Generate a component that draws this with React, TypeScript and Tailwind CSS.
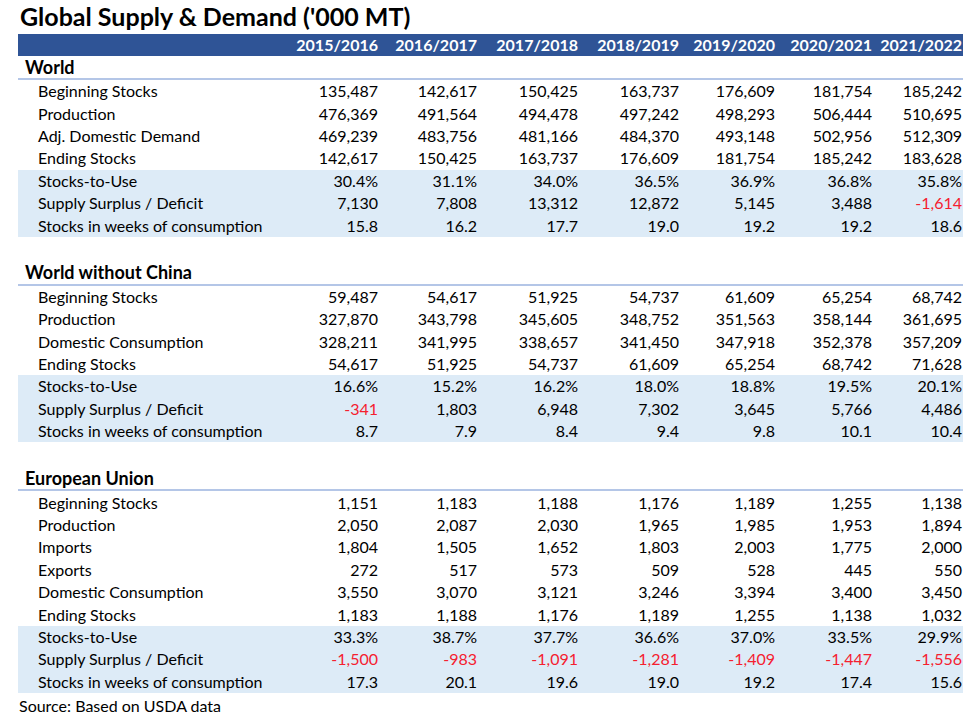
import React from "react";

type Row = { label: string; values: string[]; shaded?: boolean };
type Section = { title: string; rows: Row[] };

const years = ["2015/2016", "2016/2017", "2017/2018", "2018/2019", "2019/2020", "2020/2021", "2021/2022"];

const sections: Section[] = [
  {
    title: "World",
    rows: [
      { label: "Beginning Stocks", values: ["135,487", "142,617", "150,425", "163,737", "176,609", "181,754", "185,242"] },
      { label: "Production", values: ["476,369", "491,564", "494,478", "497,242", "498,293", "506,444", "510,695"] },
      { label: "Adj. Domestic Demand", values: ["469,239", "483,756", "481,166", "484,370", "493,148", "502,956", "512,309"] },
      { label: "Ending Stocks", values: ["142,617", "150,425", "163,737", "176,609", "181,754", "185,242", "183,628"] },
      { label: "Stocks-to-Use", values: ["30.4%", "31.1%", "34.0%", "36.5%", "36.9%", "36.8%", "35.8%"], shaded: true },
      { label: "Supply Surplus / Deficit", values: ["7,130", "7,808", "13,312", "12,872", "5,145", "3,488", "-1,614"], shaded: true },
      { label: "Stocks in weeks of consumption", values: ["15.8", "16.2", "17.7", "19.0", "19.2", "19.2", "18.6"], shaded: true },
    ],
  },
  {
    title: "World without China",
    rows: [
      { label: "Beginning Stocks", values: ["59,487", "54,617", "51,925", "54,737", "61,609", "65,254", "68,742"] },
      { label: "Production", values: ["327,870", "343,798", "345,605", "348,752", "351,563", "358,144", "361,695"] },
      { label: "Domestic Consumption", values: ["328,211", "341,995", "338,657", "341,450", "347,918", "352,378", "357,209"] },
      { label: "Ending Stocks", values: ["54,617", "51,925", "54,737", "61,609", "65,254", "68,742", "71,628"] },
      { label: "Stocks-to-Use", values: ["16.6%", "15.2%", "16.2%", "18.0%", "18.8%", "19.5%", "20.1%"], shaded: true },
      { label: "Supply Surplus / Deficit", values: ["-341", "1,803", "6,948", "7,302", "3,645", "5,766", "4,486"], shaded: true },
      { label: "Stocks in weeks of consumption", values: ["8.7", "7.9", "8.4", "9.4", "9.8", "10.1", "10.4"], shaded: true },
    ],
  },
  {
    title: "European Union",
    rows: [
      { label: "Beginning Stocks", values: ["1,151", "1,183", "1,188", "1,176", "1,189", "1,255", "1,138"] },
      { label: "Production", values: ["2,050", "2,087", "2,030", "1,965", "1,985", "1,953", "1,894"] },
      { label: "Imports", values: ["1,804", "1,505", "1,652", "1,803", "2,003", "1,775", "2,000"] },
      { label: "Exports", values: ["272", "517", "573", "509", "528", "445", "550"] },
      { label: "Domestic Consumption", values: ["3,550", "3,070", "3,121", "3,246", "3,394", "3,400", "3,450"] },
      { label: "Ending Stocks", values: ["1,183", "1,188", "1,176", "1,189", "1,255", "1,138", "1,032"] },
      { label: "Stocks-to-Use", values: ["33.3%", "38.7%", "37.7%", "36.6%", "37.0%", "33.5%", "29.9%"], shaded: true },
      { label: "Supply Surplus / Deficit", values: ["-1,500", "-983", "-1,091", "-1,281", "-1,409", "-1,447", "-1,556"], shaded: true },
      { label: "Stocks in weeks of consumption", values: ["17.3", "20.1", "19.6", "19.0", "19.2", "17.4", "15.6"], shaded: true },
    ],
  },
];

const grid = "grid grid-cols-[262px_99px_99px_101px_101px_96px_97px_90px]";

function DataRow({ row }: { row: Row }) {
  return (
    <div className={`${grid} h-[22.4px] items-center ${row.shaded ? "bg-[#ddebf7]" : ""}`}>
      <div className="pl-[20px] whitespace-nowrap">{row.label}</div>
      {row.values.map((v, i) => (
        <div key={i} className={`text-right pr-[1px] ${v.startsWith("-") ? "text-[#f5202f]" : ""}`}>
          {v}
        </div>
      ))}
    </div>
  );
}

export default function App() {
  return (
    <div className="w-[980px] h-[723px] bg-white text-black text-[16px] leading-none" style={{ fontFamily: "Lato, 'Open Sans', sans-serif" }}>
      <div className="pl-[20px] pt-[4px] h-[34px] text-[25px] font-bold">Global Supply &amp; Demand ('000 MT)</div>
      <div className="ml-[18px] w-[945px]">
        <div className={`${grid} h-[22px] items-center bg-[#2f5496] text-white font-bold`}>
          <div />
          {years.map((y) => (
            <div key={y} className="text-right pr-[1px]">{y}</div>
          ))}
        </div>
        {sections.map((s, si) => (
          <div key={s.title}>
            {si > 0 && <div className="h-[24px]" />}
            <div className={`${si > 0 ? "h-[23px]" : "h-[22px]"} flex items-center pl-[7px] font-bold text-[18px]`}>{s.title}</div>
            <div className="h-[2px] bg-[#b4c6e7]" />
            {s.rows.map((r) => (
              <DataRow key={r.label} row={r} />
            ))}
          </div>
        ))}
        <div className="h-[26px] flex items-center pl-[1px]">Source: Based on USDA data</div>
      </div>
    </div>
  );
}
